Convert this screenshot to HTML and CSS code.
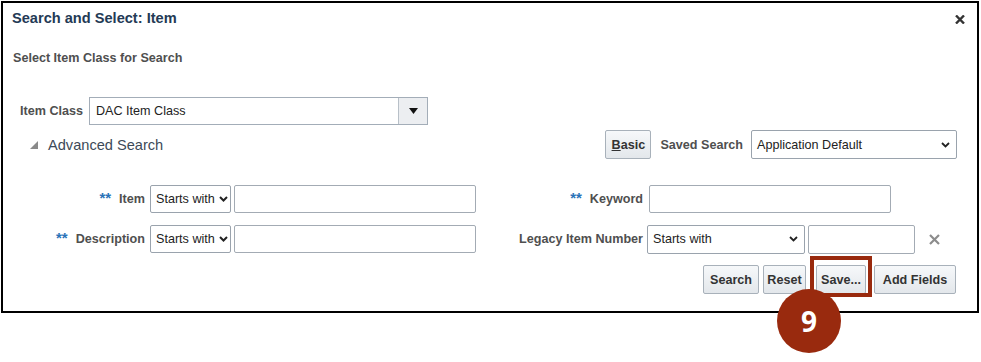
FILE: index.html
```html
<!DOCTYPE html>
<html lang="en">

<head>
  <meta charset="UTF-8">
  <title>Search and Select: Item</title>
  <link rel="stylesheet" href="styles.css">
</head>

<body>
  <div class="dialog">
    <div class="dialog-header">
      <span class="dialog-title">Search and Select: Item</span>
      <svg class="close-icon" width="10" height="9" viewBox="0 0 10 9">
        <path d="M1 0.5 L9 8.5 M9 0.5 L1 8.5" stroke="#333" stroke-width="2.4" />
      </svg>
    </div>

    <div class="section-title">Select Item Class for Search</div>

    <div class="class-row">
      <span class="field-label">Item Class</span>
      <div class="combo">
        <span class="combo-text">DAC Item Class</span>
        <span class="combo-btn">
          <svg width="9" height="6" viewBox="0 0 9 6"><polygon points="0,0 9,0 4.5,6" fill="#111" /></svg>
        </span>
      </div>
    </div>

    <div class="adv-row">
      <div class="adv-toggle">
        <svg width="8" height="8" viewBox="0 0 8 8"><polygon points="8,0 8,8 0,8" fill="#8a8a8a" /></svg>
        <span>Advanced Search</span>
      </div>
      <div class="saved">
        <div class="btn btn-basic"><u>B</u>asic</div>
        <span class="field-label">Saved Search</span>
        <div class="select select-saved">
          <span>Application Default</span>
          <svg width="9" height="6" viewBox="0 0 9 6"><polyline points="1,1 4.5,4.5 8,1" fill="none" stroke="#222" stroke-width="1.8" /></svg>
        </div>
      </div>
    </div>

    <div class="fields">
      <div class="label-cell"><span class="req">**</span><span class="field-label">Item</span></div>
      <div class="control-cell">
        <div class="select select-op">
          <span>Starts with</span>
          <svg width="9" height="6" viewBox="0 0 9 6"><polyline points="1,1 4.5,4.5 8,1" fill="none" stroke="#222" stroke-width="2" /></svg>
        </div>
        <div class="input input-wide"></div>
      </div>
      <div class="label-cell"><span class="req">**</span><span class="field-label">Keyword</span></div>
      <div class="control-cell">
        <div class="input input-keyword"></div>
      </div>

      <div class="label-cell"><span class="req">**</span><span class="field-label">Description</span></div>
      <div class="control-cell">
        <div class="select select-op">
          <span>Starts with</span>
          <svg width="9" height="6" viewBox="0 0 9 6"><polyline points="1,1 4.5,4.5 8,1" fill="none" stroke="#222" stroke-width="2" /></svg>
        </div>
        <div class="input input-wide"></div>
      </div>
      <div class="label-cell"><span class="field-label">Legacy Item Number</span></div>
      <div class="control-cell">
        <div class="select select-legacy">
          <span>Starts with</span>
          <svg width="9" height="6" viewBox="0 0 9 6"><polyline points="1,1 4.5,4.5 8,1" fill="none" stroke="#222" stroke-width="1.8" /></svg>
        </div>
        <div class="input input-legacy"></div>
        <svg class="clear-icon" width="11" height="11" viewBox="0 0 11 11">
          <path d="M1 1 L10 10 M10 1 L1 10" stroke="#8c8c8c" stroke-width="2.2" />
        </svg>
      </div>
    </div>

    <div class="actions">
      <div class="btn btn-search">Search</div>
      <div class="btn btn-reset">Reset</div>
      <div class="btn btn-save">Save...</div>
      <div class="btn btn-add">Add Fields</div>
    </div>

    <!-- step callout -->
    <div class="callout-box"></div>
    <div class="callout-num">9</div>
  </div>
</body>

</html>
```

FILE: styles.css
```css
html,
body {
  min-height: 100%;
}

body {
  margin: 0;
  padding: 0 0 60px;
  background: #fff;
  font-family: "Liberation Sans", Arial, sans-serif;
  font-size: 12.6px;
  color: #333;
}

.dialog {
  position: relative;
  margin: 1px 0 0 1px;
  width: 974px;
  height: 308px;
  border: 2px solid #000;
}

.dialog-header {
  display: flex;
  align-items: center;
  justify-content: space-between;
  padding: 7px 12px 0 9px;
  height: 17px;
}

.dialog-title {
  font-size: 14.6px;
  font-weight: bold;
  color: #243a55;
  line-height: 17px;
}

.close-icon {
  margin-top: 2px;
}

.section-title {
  margin-top: 23px;
  padding-left: 10px;
  line-height: 16px;
  font-weight: bold;
  color: #4f4f4f;
}

.field-label {
  font-weight: bold;
  color: #4f4f4f;
  white-space: nowrap;
}

/* Item class */
.class-row {
  display: flex;
  align-items: center;
  gap: 6px;
  margin-top: 31px;
  padding-left: 17px;
  height: 28px;
}

.combo {
  display: flex;
  width: 339px;
  height: 28px;
  box-sizing: border-box;
  border: 1px solid #a3adb8;
}

.combo-text {
  flex: 1;
  padding-left: 6px;
  line-height: 26px;
  color: #222;
}

.combo-btn {
  width: 28px;
  display: flex;
  align-items: center;
  justify-content: center;
  background: #eceef1;
  border-left: 1px solid #b8c0c8;
}

/* Advanced search row */
.adv-row {
  display: flex;
  align-items: center;
  justify-content: space-between;
  margin-top: 5px;
  padding: 0 20px 0 27px;
  height: 29px;
}

.adv-toggle {
  display: flex;
  align-items: center;
  gap: 10px;
  font-size: 14.6px;
  color: #3d4a58;
}

.saved {
  display: flex;
  align-items: center;
}

.saved .field-label {
  margin: 0 8px 0 9px;
}

.btn {
  display: flex;
  align-items: center;
  justify-content: center;
  height: 29px;
  box-sizing: border-box;
  border: 1px solid #a8b1ba;
  border-radius: 2px;
  background: linear-gradient(#f6f8fa, #e3e7eb);
  font-weight: bold;
  color: #333;
}

.btn-basic {
  width: 46px;
}

.select {
  display: flex;
  align-items: center;
  justify-content: space-between;
  box-sizing: border-box;
  border: 1px solid #9aa3ad;
  border-radius: 2px;
  background: #fff;
  color: #222;
}

.select-saved {
  width: 206px;
  height: 29px;
  padding: 0 6px 0 5px;
}

/* Search fields */
.fields {
  display: grid;
  grid-template-columns: 147px 326px 171px 1fr;
  grid-auto-rows: 28px;
  row-gap: 12px;
  margin-top: 26px;
}

.label-cell {
  display: flex;
  align-items: center;
  justify-content: flex-end;
  padding-right: 5px;
}

.label-cell:nth-child(4n+3) {
  padding-right: 4px;
}

.req {
  color: #2a73b8;
  font-weight: bold;
  font-size: 15px;
  margin-right: 8px;
  position: relative;
  top: -2px;
}

.control-cell {
  display: flex;
  align-items: center;
  gap: 3px;
}

.select-op {
  width: 81px;
  height: 28px;
  padding: 0 2px 0 5px;
}

.select-legacy {
  width: 158px;
  height: 29px;
  padding: 0 6px 0 5px;
}

.input {
  height: 28px;
  box-sizing: border-box;
  border: 1px solid #a3abb4;
  border-radius: 2px;
  background: #fff;
}

.input-wide {
  width: 242px;
}

.input-keyword {
  width: 242px;
  margin-left: 2px;
}

.input-legacy {
  width: 107px;
  height: 29px;
}

.clear-icon {
  margin-left: 11px;
}

/* Buttons */
.actions {
  display: flex;
  justify-content: flex-end;
  margin-top: 12px;
  padding-right: 21px;
}

.btn-search {
  width: 56px;
}

.btn-reset {
  width: 43px;
  margin-left: 4px;
}

.btn-save {
  width: 50px;
  margin-left: 10px;
}

.btn-add {
  width: 82px;
  margin-left: 8px;
}

.callout-box {
  position: absolute;
  left: 807px;
  top: 253px;
  width: 62px;
  height: 41px;
  box-sizing: border-box;
  border: 4px solid #992a0e;
}

.callout-num {
  position: absolute;
  left: 774px;
  top: 286px;
  width: 64px;
  height: 64px;
  border-radius: 50%;
  background: #992a0e;
  color: #fff;
  font-family: "Open Sans", sans-serif;
  font-weight: bold;
  font-size: 28px;
  display: flex;
  align-items: center;
  justify-content: center;
}
```
